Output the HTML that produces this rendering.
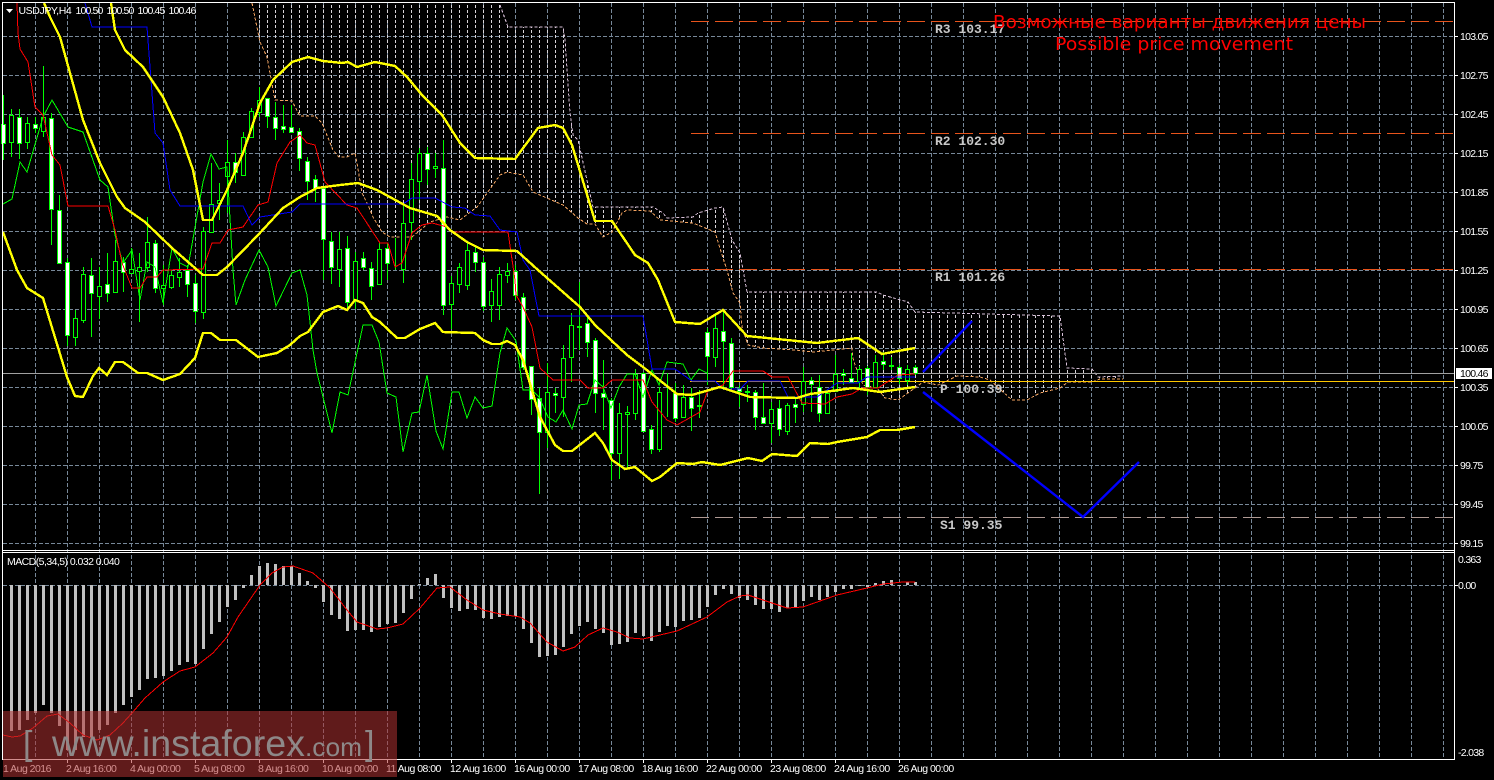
<!DOCTYPE html>
<html><head><meta charset="utf-8"><title>USDJPY,H4</title>
<style>
html,body{margin:0;padding:0;background:#000;width:1494px;height:780px;overflow:hidden}
svg{display:block}
.a{font-family:"Liberation Sans",sans-serif;font-size:10.5px;fill:#fff}
.m{font-family:"Liberation Mono",monospace;font-size:13px;font-weight:bold;fill:#c8c8c8}
.t{font-family:"DejaVu Sans",sans-serif;font-size:18px;fill:#f00}
.w{font-family:"Liberation Sans",sans-serif;fill:#8e8888}
</style></head><body>
<svg width="1494" height="780" viewBox="0 0 1494 780" xmlns="http://www.w3.org/2000/svg">
<defs>
<pattern id="h" patternUnits="userSpaceOnUse" x="3" y="0" width="8" height="5"><rect x="0" y="0" width="1" height="3" fill="#d8d4d8"/></pattern>
<clipPath id="cc"><polygon points="252,3 500,3 508,27 563,27 565,40 570,113 573,135 578,140 593,207 653,207 663,213 667,218 693,217 698,213 715,208 723,207 732,240 740,253 747,292 877,292 883,295 908,302 915,312 1060,316 1067,368 1092,369 1098,377 1123,376 1123,379 1100,379 1092,382 1068,382 1060,388 1040,393 1027,400 1012,400 1003,392 990,380 980,377 957,376 938,385 923,382 915,388 898,400 885,398 877,388 863,385 855,365 853,358 852,348 813,352 795,350 763,348 748,345 742,327 740,303 733,293 727,270 723,258 715,232 693,223 660,220 650,211 627,210 622,213 612,232 603,237 595,224 587,224 578,218 563,205 533,192 523,175 507,172 500,175 477,207 460,220 447,217 430,222 412,237 390,237 382,232 373,217 368,205 362,193 357,163 355,153 347,157 339,157 333,150 322,123 315,116 300,116 292,101 275,100 267,57 260,42"/></clipPath>
</defs>
<rect width="1494" height="780" fill="#000"/>
<g shape-rendering="crispEdges" fill="none">
<!-- grid -->
<path stroke="#778899" stroke-dasharray="4 2" d="M3 36.5H1454M3 75.5H1454M3 114.5H1454M3 153.5H1454M3 192.5H1454M3 231.5H1454M3 270.5H1454M3 309.5H1454M3 348.5H1454M3 387.5H1454M3 426.5H1454M3 465.5H1454M3 504.5H1454M3 543.5H1454M3 585.5H1454"/>
<path stroke="#778899" stroke-dasharray="4 2" d="M35.5 3V759M67.5 3V759M99.5 3V759M131.5 3V759M163.5 3V759M195.5 3V759M227.5 3V759M259.5 3V759M291.5 3V759M323.5 3V759M355.5 3V759M387.5 3V759M419.5 3V759M451.5 3V759M483.5 3V759M515.5 3V759M547.5 3V759M579.5 3V759M611.5 3V759M643.5 3V759M675.5 3V759M707.5 3V759M739.5 3V759M771.5 3V759M803.5 3V759M835.5 3V759M867.5 3V759M899.5 3V759M931.5 3V759M963.5 3V759M995.5 3V759M1027.5 3V759M1059.5 3V759M1091.5 3V759M1123.5 3V759M1155.5 3V759M1187.5 3V759M1219.5 3V759M1251.5 3V759M1283.5 3V759M1315.5 3V759M1347.5 3V759M1379.5 3V759M1411.5 3V759M1443.5 3V759"/>
<!-- cloud -->
<rect x="252" y="0" width="880" height="410" fill="url(#h)" clip-path="url(#cc)"/>
<polyline stroke="#f4a460" stroke-dasharray="3 2" points="252,3 260,42 267,57 275,100 292,101 300,116 315,116 322,123 333,150 339,157 347,157 355,153 357,163 362,193 368,205 373,217 382,232 390,237 412,237 430,222 447,217 460,220 477,207 500,175 507,172 523,175 533,192 563,205 578,218 587,224 595,224 603,237 612,232 622,213 627,210 650,211 660,220 693,223 715,232 723,258 727,270 733,293 740,303 742,327 748,345 763,348 795,350 813,352 852,348 853,358 855,365 863,385 877,388 885,398 898,400 915,388 923,382 938,385 957,376 980,377 990,380 1003,392 1012,400 1027,400 1040,393 1060,388 1068,382 1092,382 1100,379 1123,379"/>
<polyline stroke="#d8bfd8" stroke-dasharray="3 2" points="500,5 508,27 563,27 565,40 570,113 573,135 578,140 593,207 653,207 663,213 667,218 693,217 698,213 715,208 723,207 732,240 740,253 747,292 877,292 883,295 908,302 915,312 1060,316 1067,368 1092,369 1098,377 1123,376"/>
<!-- level lines -->
<path stroke="#e8541c" stroke-dasharray="18 6" d="M691 21.5H1454M691 133.5H1454M691 269.5H1454"/>
<path stroke="#b09a94" stroke-dasharray="18 6" d="M691 517.5H1454"/>
<path stroke="#a0a0a0" d="M3 373.5H1454"/>
<path stroke="#ffc800" d="M690 381.5H1454"/>
<!-- macd bars -->
<path stroke="#c0c0c0" stroke-width="3" d="M11.5 585V731M19.5 585V730M27.5 585V720M35.5 585V713M43.5 585V705M51.5 585V713M59.5 585V726M67.5 585V750M75.5 585V750M83.5 585V737M91.5 585V738M99.5 585V730M107.5 585V725M115.5 585V713M123.5 585V705M131.5 585V697M139.5 585V690M147.5 585V679M155.5 585V678M163.5 585V676M171.5 585V671M179.5 585V665M187.5 585V662M195.5 585V664M203.5 585V649M211.5 585V634M219.5 585V622M227.5 585V607M235.5 585V600M243.5 585V588M251.5 585V575M259.5 585V566M267.5 585V563M275.5 585V564M283.5 585V566M291.5 585V566M299.5 585V573M307.5 585V581M315.5 585V588M323.5 585V602M331.5 585V615M339.5 585V619M347.5 585V631M355.5 585V630M363.5 585V630M371.5 585V632M379.5 585V627M387.5 585V624M395.5 585V623M403.5 585V613M411.5 585V599M419.5 585V584M427.5 585V578M435.5 585V574M443.5 585V598M451.5 585V608M459.5 585V611M467.5 585V609M475.5 585V610M483.5 585V618M491.5 585V619M499.5 585V617M507.5 585V616M515.5 585V616M523.5 585V629M531.5 585V643M539.5 585V657M547.5 585V656M555.5 585V655M563.5 585V647M571.5 585V634M579.5 585V626M587.5 585V622M595.5 585V629M603.5 585V633M611.5 585V645M619.5 585V644M627.5 585V642M635.5 585V633M643.5 585V636M651.5 585V641M659.5 585V632M667.5 585V626M675.5 585V627M683.5 585V621M691.5 585V620M699.5 585V618M707.5 585V607M715.5 585V595M723.5 585V589M731.5 585V594M739.5 585V598M747.5 585V600M755.5 585V605M763.5 585V609M771.5 585V609M779.5 585V612M787.5 585V608M795.5 585V607M803.5 585V601M811.5 585V597M819.5 585V600M827.5 585V597M835.5 585V592M843.5 585V589M851.5 585V589M859.5 585V586M867.5 585V587M875.5 585V583M883.5 585V581M891.5 585V580M899.5 585V586M907.5 585V582M915.5 585V582"/>
<polyline stroke="#f00" points="3,735 12,737 20,736 33,728 47,716 58,714 70,723 83,735 97,740 110,735 123,723 132,713 145,698 163,682 180,671 195,667 213,653 227,637 238,617 260,585 272,573 283,567 293,566 313,573 330,588 347,610 357,622 377,629 387,628 403,624 420,608 437,588 450,587 467,600 483,610 500,614 520,617 530,623 547,642 563,651 575,647 588,635 603,628 617,632 630,638 643,639 677,631 707,617 727,602 740,596 748,595 763,600 787,608 803,607 837,595 867,588 883,584 903,582 915,582"/>
<!-- candle wicks -->
<path stroke="#0f0" d="M3.5 95V160M11.5 109V157M19.5 109V159M27.5 117V149M35.5 117V133M43.5 66V137M51.5 113V245M59.5 195V264M67.5 258V346M75.5 310V346M83.5 267V323M91.5 258V337M99.5 267V319M107.5 253V302M115.5 240V293M123.5 257V292M131.5 248V273M139.5 253V322M147.5 217V272M155.5 240V293M163.5 265V305M171.5 270V289M179.5 258V287M187.5 265V297M195.5 275V323M203.5 227V319M211.5 163V233M219.5 183V220M227.5 140V213M235.5 153V183M243.5 132V175M251.5 108V137M259.5 87V117M267.5 98V128M275.5 102V140M283.5 105V133M291.5 105V132M299.5 128V171M307.5 157V200M315.5 175V202M323.5 188V280M331.5 232V284M339.5 232V287M347.5 236V308M355.5 252V309M363.5 252V270M371.5 262V300M379.5 242V285M387.5 243V280M395.5 238V270M403.5 203V283M411.5 163V240M419.5 148V200M427.5 147V185M435.5 153V178M443.5 140V315M451.5 276V329M459.5 263V293M467.5 243V290M475.5 245V272M483.5 257V311M491.5 279V322M499.5 267V320M507.5 263V283M515.5 265V300M523.5 293V370M531.5 366V415M539.5 388V494M547.5 363V448M555.5 388V413M563.5 345V417M571.5 313V382M579.5 282V350M587.5 317V357M595.5 338V413M603.5 360V430M611.5 398V480M619.5 403V479M627.5 406V468M635.5 369V420M643.5 372V431M651.5 425V454M659.5 387V452M667.5 373V417M675.5 383V422M683.5 385V418M691.5 388V431M699.5 390V418M707.5 328V385M715.5 313V367M723.5 312V390M731.5 338V392M739.5 385V407M747.5 385V402M755.5 390V430M763.5 383V424M771.5 402V443M779.5 400V436M787.5 403V435M795.5 398V423M803.5 367V412M811.5 377V412M819.5 375V422M827.5 390V414M835.5 355V392M843.5 369V385M851.5 353V383M859.5 366V390M867.5 366V395M875.5 355V388M883.5 352V370M891.5 357V370M899.5 365V384M907.5 365V385M915.5 365V375"/>
<!-- hollow bodies -->
<path stroke="#0f0" fill="#000" d="M9.5 115.5h4v27h-4zM25.5 123.5h4v19h-4zM41.5 117.5h4v14h-4zM73.5 318.5h4v19h-4zM81.5 274.5h4v46h-4zM97.5 286.5h4v10h-4zM113.5 261.5h4v31h-4zM129.5 269.5h4v4h-4zM137.5 267.5h4v4h-4zM145.5 242.5h4v25h-4zM161.5 285.5h4v3h-4zM169.5 275.5h4v12h-4zM177.5 272.5h4v5h-4zM201.5 231.5h4v81h-4zM209.5 204.5h4v28h-4zM217.5 200.5h4v3h-4zM225.5 162.5h4v14h-4zM241.5 137.5h4v38h-4zM249.5 111.5h4v26h-4zM257.5 100.5h4v12h-4zM337.5 249.5h4v20h-4zM353.5 261.5h4v39h-4zM377.5 249.5h4v35h-4zM401.5 223.5h4v46h-4zM409.5 179.5h4v43h-4zM417.5 153.5h4v28h-4zM433.5 166.5h4v2h-4zM449.5 283.5h4v21h-4zM457.5 267.5h4v17h-4zM465.5 250.5h4v35h-4zM489.5 291.5h4v14h-4zM497.5 274.5h4v31h-4zM505.5 271.5h4v4h-4zM545.5 392.5h4v40h-4zM561.5 358.5h4v39h-4zM569.5 325.5h4v32h-4zM577.5 326.5h4v1h-4zM617.5 413.5h4v40h-4zM625.5 412.5h4v2h-4zM633.5 374.5h4v39h-4zM657.5 392.5h4v57h-4zM681.5 397.5h4v20h-4zM697.5 405.5h4v1h-4zM713.5 328.5h4v29h-4zM745.5 391.5h4v1h-4zM769.5 409.5h4v14h-4zM785.5 405.5h4v26h-4zM801.5 381.5h4v23h-4zM825.5 393.5h4v20h-4zM833.5 374.5h4v17h-4zM857.5 369.5h4v12h-4zM873.5 362.5h4v25h-4zM889.5 365.5h4v1h-4zM905.5 369.5h4v11h-4z"/>
<!-- white bodies -->
<path stroke="#0f0" fill="#fff" d="M1.5 124.5h4v19h-4zM17.5 117.5h4v26h-4zM33.5 124.5h4v4h-4zM49.5 118.5h4v91h-4zM57.5 210.5h4v53h-4zM65.5 262.5h4v73h-4zM89.5 275.5h4v18h-4zM105.5 284.5h4v9h-4zM121.5 262.5h4v10h-4zM153.5 243.5h4v45h-4zM185.5 270.5h4v14h-4zM193.5 283.5h4v28h-4zM233.5 162.5h4v10h-4zM265.5 98.5h4v18h-4zM273.5 117.5h4v11h-4zM281.5 126.5h4v3h-4zM289.5 127.5h4v5h-4zM297.5 131.5h4v27h-4zM305.5 161.5h4v20h-4zM313.5 179.5h4v9h-4zM321.5 188.5h4v51h-4zM329.5 241.5h4v26h-4zM345.5 248.5h4v54h-4zM361.5 258.5h4v9h-4zM369.5 268.5h4v18h-4zM385.5 248.5h4v15h-4zM425.5 153.5h4v16h-4zM441.5 168.5h4v137h-4zM473.5 252.5h4v10h-4zM481.5 262.5h4v44h-4zM513.5 271.5h4v24h-4zM521.5 297.5h4v70h-4zM529.5 366.5h4v33h-4zM537.5 398.5h4v34h-4zM553.5 393.5h4v2h-4zM585.5 323.5h4v19h-4zM593.5 340.5h4v53h-4zM601.5 393.5h4v4h-4zM609.5 400.5h4v53h-4zM641.5 373.5h4v58h-4zM649.5 429.5h4v20h-4zM673.5 393.5h4v25h-4zM689.5 397.5h4v11h-4zM705.5 332.5h4v24h-4zM721.5 331.5h4v10h-4zM729.5 343.5h4v44h-4zM737.5 388.5h4v3h-4zM753.5 392.5h4v25h-4zM761.5 417.5h4v6h-4zM777.5 408.5h4v21h-4zM793.5 404.5h4v3h-4zM809.5 380.5h4v4h-4zM817.5 387.5h4v26h-4zM841.5 373.5h4v2h-4zM849.5 378.5h4v4h-4zM865.5 368.5h4v19h-4zM881.5 361.5h4v3h-4zM897.5 367.5h4v11h-4zM913.5 367.5h4v6h-4z"/>
<!-- chikou green -->
<polyline stroke="#0f0" points="3,204 12,199 20,162 27,172 43,117 52,100 68,127 83,132 100,180 108,187 115,235 123,263 132,250 140,300 147,262 155,267 163,303 172,248 180,263 188,267 203,182 211,154 219,169 227,167 233,270 236,305 245,280 259,250 268,267 276,306 292,273 300,270 307,295 309,313 313,350 317,373 332,433 340,392 348,395 363,325 372,325 379,342 387,393 396,397 403,452 412,413 419,412 427,375 436,431 443,449 452,392 459,392 467,418 475,397 483,408 492,406 500,353 507,328 516,341 523,390 532,390 539,397 548,417 556,422 563,410 572,429 579,405 587,404 595,380 603,387 611,408 619,387 627,374 635,374 643,397 652,370 659,385 667,362 683,364 691,380 699,369 707,373"/>
<!-- tenkan red -->
<polyline stroke="#f00" points="17,3 18,33 20,49 28,62 35,107 43,115 52,155 60,165 68,206 108,206 115,230 122,263 132,288 140,288 147,277 157,277 163,270 203,269 212,243 220,243 228,230 243,227 258,205 268,202 277,163 290,142 300,135 307,143 315,145 325,182 347,205 357,208 380,243 388,243 395,267 402,263 412,233 422,225 432,223 447,227 452,232 508,232 515,280 516,295 523,307 532,327 540,368 553,380 580,380 588,388 603,388 612,380 643,380 652,402 667,420 677,425 700,412 708,390 723,385 733,371 763,371 772,377 788,377 802,403 825,404 837,397 852,394 862,388 878,388 898,375 915,374"/>
<!-- kijun blue -->
<polyline stroke="#00f" points="85,3 92,27 147,27 155,133 163,143 170,190 180,206 243,206 252,225 260,217 292,212 300,204 403,204 412,198 435,198 452,207 465,208 475,215 490,216 500,230 517,232 523,260 530,270 539,316 643,316 652,369 675,369 692,381 715,381 723,389 740,389 748,381 780,381 788,397 817,397 837,383 858,383 867,377 915,377"/>
<!-- bollinger -->
<g stroke="#ff0" stroke-width="2.4">
<polyline points="44,3 50,17 60,37 70,73 83,120 100,163 117,197 125,208 145,222 172,248 203,275 217,275 227,267 258,235 283,208 300,197 317,188 340,185 358,183 377,190 410,208 437,216 450,230 467,242 483,250 517,251 538,270 580,307 595,325 627,355 643,367 677,394 692,395 720,387 750,397 797,398 810,394 853,388 880,392 915,387"/>
<polyline points="111,3 115,30 125,50 143,67 163,97 180,133 193,170 203,220 212,220 227,190 243,153 260,103 273,80 292,62 308,57 323,61 342,63 348,62 357,67 375,62 395,66 407,77 422,95 442,115 460,143 475,158 515,159 538,128 555,125 563,128 572,145 595,221 612,221 635,255 648,263 658,280 675,322 700,324 723,310 747,336 777,339 817,343 858,338 882,354 898,351 915,348"/>
<polyline points="3,232 17,270 27,288 43,298 67,377 75,396 83,397 93,376 99,368 107,375 115,362 123,362 138,373 147,373 163,380 180,374 195,358 203,333 211,333 220,340 236,340 258,357 277,353 290,345 300,336 308,332 323,312 338,306 347,310 355,300 363,303 372,317 380,322 397,338 405,338 420,329 435,323 443,332 475,333 483,340 492,344 500,344 507,341 515,345 523,360 540,417 555,445 563,451 572,451 595,433 603,443 612,460 625,469 635,467 652,481 660,477 677,463 693,464 702,462 720,465 748,458 762,461 772,454 797,456 810,443 828,444 837,442 867,437 880,430 897,430 915,427"/>
</g>
<!-- frame -->
<path stroke="#fff" d="M2.5 2.5H1454.5V759.5H2.5ZM2 550.5H1454M2 552.5H1454"/>
<!-- ticks -->
<path stroke="#fff" d="M1455 36.5h3M1455 75.5h3M1455 114.5h3M1455 153.5h3M1455 192.5h3M1455 231.5h3M1455 270.5h3M1455 309.5h3M1455 348.5h3M1455 387.5h3M1455 426.5h3M1455 465.5h3M1455 504.5h3M1455 543.5h3M1455 585.5h3M67.5 760v3M131.5 760v3M195.5 760v3M259.5 760v3M323.5 760v3M387.5 760v3M451.5 760v3M515.5 760v3M579.5 760v3M643.5 760v3M707.5 760v3M771.5 760v3M835.5 760v3M899.5 760v3"/>
<rect x="1456" y="368" width="36" height="11" fill="#fff"/>
</g>
<!-- forecast -->
<g fill="none" stroke="#00f" stroke-width="2.4"><polyline points="923,372 972,321"/><polyline points="923,392 1000,452 1083,517 1139,462"/></g>
<!-- axis text -->
<g class="a" style="letter-spacing:-.72px">
<text x="1460" y="40">103.05</text><text x="1460" y="79">102.75</text><text x="1460" y="118">102.45</text><text x="1460" y="157">102.15</text><text x="1460" y="196">101.85</text><text x="1460" y="235">101.55</text><text x="1460" y="274">101.25</text><text x="1460" y="313">100.95</text><text x="1460" y="352">100.65</text><text x="1460" y="391">100.35</text><text x="1460" y="430">100.05</text><text x="1460" y="469">99.75</text><text x="1460" y="508">99.45</text><text x="1460" y="547">99.15</text>
<text x="1460" y="377" style="fill:#000">100.46</text>
<text x="1458" y="563">0.363</text><text x="1458" y="589">0.00</text><text x="1458" y="756">-2.038</text>
</g>
<g class="a" style="letter-spacing:-.52px">
<text x="3" y="772">1 Aug 2016</text><text x="66" y="772">2 Aug 16:00</text><text x="130" y="772">4 Aug 00:00</text><text x="194" y="772">5 Aug 08:00</text><text x="258" y="772">8 Aug 16:00</text><text x="322" y="772">10 Aug 00:00</text><text x="386" y="772">11 Aug 08:00</text><text x="450" y="772">12 Aug 16:00</text><text x="514" y="772">16 Aug 00:00</text><text x="578" y="772">17 Aug 08:00</text><text x="642" y="772">18 Aug 16:00</text><text x="706" y="772">22 Aug 00:00</text><text x="770" y="772">23 Aug 08:00</text><text x="834" y="772">24 Aug 16:00</text><text x="898" y="772">26 Aug 00:00</text>
</g>
<polygon points="6,9 13,9 9.5,13" fill="#fff"/>
<g class="a" style="letter-spacing:-.4px"><text x="18.5" y="14">USDJPY,H4</text></g>
<g class="a" style="letter-spacing:-.85px">
<text x="75.5" y="14">100.50</text><text x="106.5" y="14">100.50</text><text x="137.5" y="14">100.45</text><text x="168.5" y="14">100.46</text>
</g>
<g class="a" style="letter-spacing:-.55px"><text x="7" y="565">MACD(5,34,5) 0.032 0.040</text></g>
<!-- level labels -->
<text class="m" x="935" y="33">R3 103.17</text>
<text class="m" x="935" y="145">R2 102.30</text>
<text class="m" x="935" y="281">R1 101.26</text>
<text class="m" x="940" y="393">P 100.39</text>
<text class="m" x="940" y="529">S1 99.35</text>
<text class="t" x="993" y="28" textLength="373" lengthAdjust="spacingAndGlyphs">Возможные варианты движения цены</text>
<text class="t" x="1055" y="50" textLength="238" lengthAdjust="spacingAndGlyphs">Possible price movement</text>
<!-- watermark -->
<rect x="3" y="711" width="394" height="66" fill="rgb(175,50,50)" fill-opacity=".55"/>
<text class="w" x="23" y="755" font-size="34">[</text>
<text class="w" x="52" y="756" font-size="37" textLength="253" lengthAdjust="spacingAndGlyphs">www.instaforex</text>
<text class="w" x="305" y="756" font-size="26" textLength="57" lengthAdjust="spacingAndGlyphs">.com</text>
<text class="w" x="365" y="755" font-size="34">]</text>
</svg>
</body></html>
